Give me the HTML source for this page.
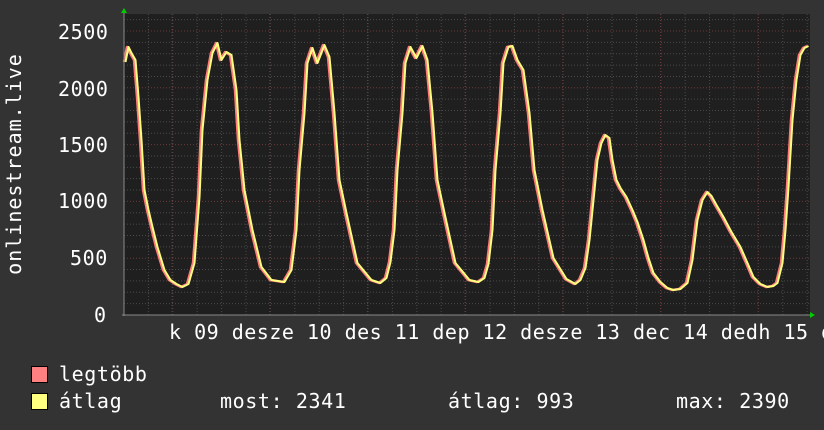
<!DOCTYPE html>
<html><head><meta charset="utf-8"><style>
body{margin:0;width:824px;height:430px;background:#333333;overflow:hidden;position:relative;font-family:"DejaVu Sans Mono","Liberation Mono",monospace;color:#fff}
.t{position:absolute;font-size:20px;white-space:pre;line-height:1;letter-spacing:0.6px}
</style></head><body>
<svg width="824" height="430" style="position:absolute;left:0;top:0" xmlns="http://www.w3.org/2000/svg">
<rect x="124" y="14" width="686" height="301" fill="#1f1f1f"/>
<g id="grid"></g>
<defs>
<polyline id="c" fill="none" stroke-linejoin="round" points="125,62 128,47 131,53 135,60 138,97 141,140 144,190 148,210 152,227 157,247 164,270 170,280 176,284 182,287 188,284 194,263 199,197 202,130 207,80 212,53 217,43 221,60 226,52 231,55 236,90 239,140 244,190 252,230 261,267 271,280 284,282 291,270 296,230 299,170 304,113 307,63 312,48 317,63 324,45 329,57 334,113 339,180 346,213 357,263 371,280 380,283 386,278 390,262 394,230 397,170 402,113 405,63 410,47 416,58 422,46 427,60 432,113 437,180 444,213 455,263 469,280 478,282 484,278 488,264 492,230 495,170 500,113 503,63 508,47 512,46 517,60 523,70 529,113 534,170 542,210 553,258 566,279 575,284 580,280 585,268 589,240 593,200 597,160 601,143 605,135 609,138 612,160 616,180 620,188 626,197 632,210 637,222 643,240 648,258 653,273 660,282 667,288 673,290 680,289 687,283 692,260 697,220 702,200 707,192 711,196 716,205 723,217 731,232 740,247 747,263 753,277 760,284 767,287 773,286 777,283 782,263 785,230 788,187 792,120 796,80 800,55 804,48 808,46"/>
</defs>
<use href="#c" stroke="#ff7a7a" stroke-width="2.5" transform="translate(-1,0)"/>
<use href="#c" stroke="#ffff80" stroke-width="2" transform="translate(0.5,0)"/>
<line x1="124" y1="12" x2="124" y2="316" stroke="#888"/>
<line x1="122" y1="315" x2="812" y2="315" stroke="#888"/>
<polygon points="121,13 127,13 124,8" fill="#0c0"/>
<polygon points="810,312 810,318 815,315" fill="#0c0"/>
<rect x="31.5" y="366.5" width="16" height="16" fill="#ff8080" stroke="#000"/>
<rect x="31.5" y="393.5" width="16" height="16" fill="#ffff80" stroke="#000"/>
<text transform="translate(21,164) rotate(-90)" text-anchor="middle" font-family="DejaVu Sans Mono" font-size="20" fill="#fff" letter-spacing="1">onlinestream.live</text>
</svg>
<script>
var g=document.getElementById('grid'),s='';
for(var x=124+24.4;x<810;x+=24.4){s+='<line x1="'+x+'" y1="14" x2="'+x+'" y2="315" stroke="#4a4a4a" stroke-dasharray="1,2"/>';}
for(var v=100;v<=2600;v+=100){var y=315-v*0.1136;if(y<14)break;s+='<line x1="124" y1="'+y+'" x2="810" y2="'+y+'" stroke="'+(v%500==0?'#6a3a3a':'#4a4a4a')+'" stroke-dasharray="1,2"/>';}
for(var i=0;i<7;i++){var x=172+i*97.7;s+='<line x1="'+x+'" y1="14" x2="'+x+'" y2="315" stroke="#6a3a3a" stroke-dasharray="1,2"/>';}
g.innerHTML=s;
</script>
<div class="t" style="left:58px;top:22px">2500</div>
<div class="t" style="left:58px;top:79px">2000</div>
<div class="t" style="left:58px;top:135px">1500</div>
<div class="t" style="left:58px;top:191px">1000</div>
<div class="t" style="left:70px;top:248px">500</div>
<div class="t" style="left:94px;top:305px">0</div>
<div class="t" style="left:169px;top:322px;letter-spacing:0.5px">k 09 desze 10 des 11 dep 12 desze 13 dec 14 dedh 15 d</div>
<div class="t" style="left:59px;top:364px">legtöbb</div>
<div class="t" style="left:59px;top:391px">átlag</div>
<div class="t" style="left:220px;top:391px">most: 2341</div>
<div class="t" style="left:448px;top:391px">átlag: 993</div>
<div class="t" style="left:676px;top:391px">max: 2390</div>
</body></html>
